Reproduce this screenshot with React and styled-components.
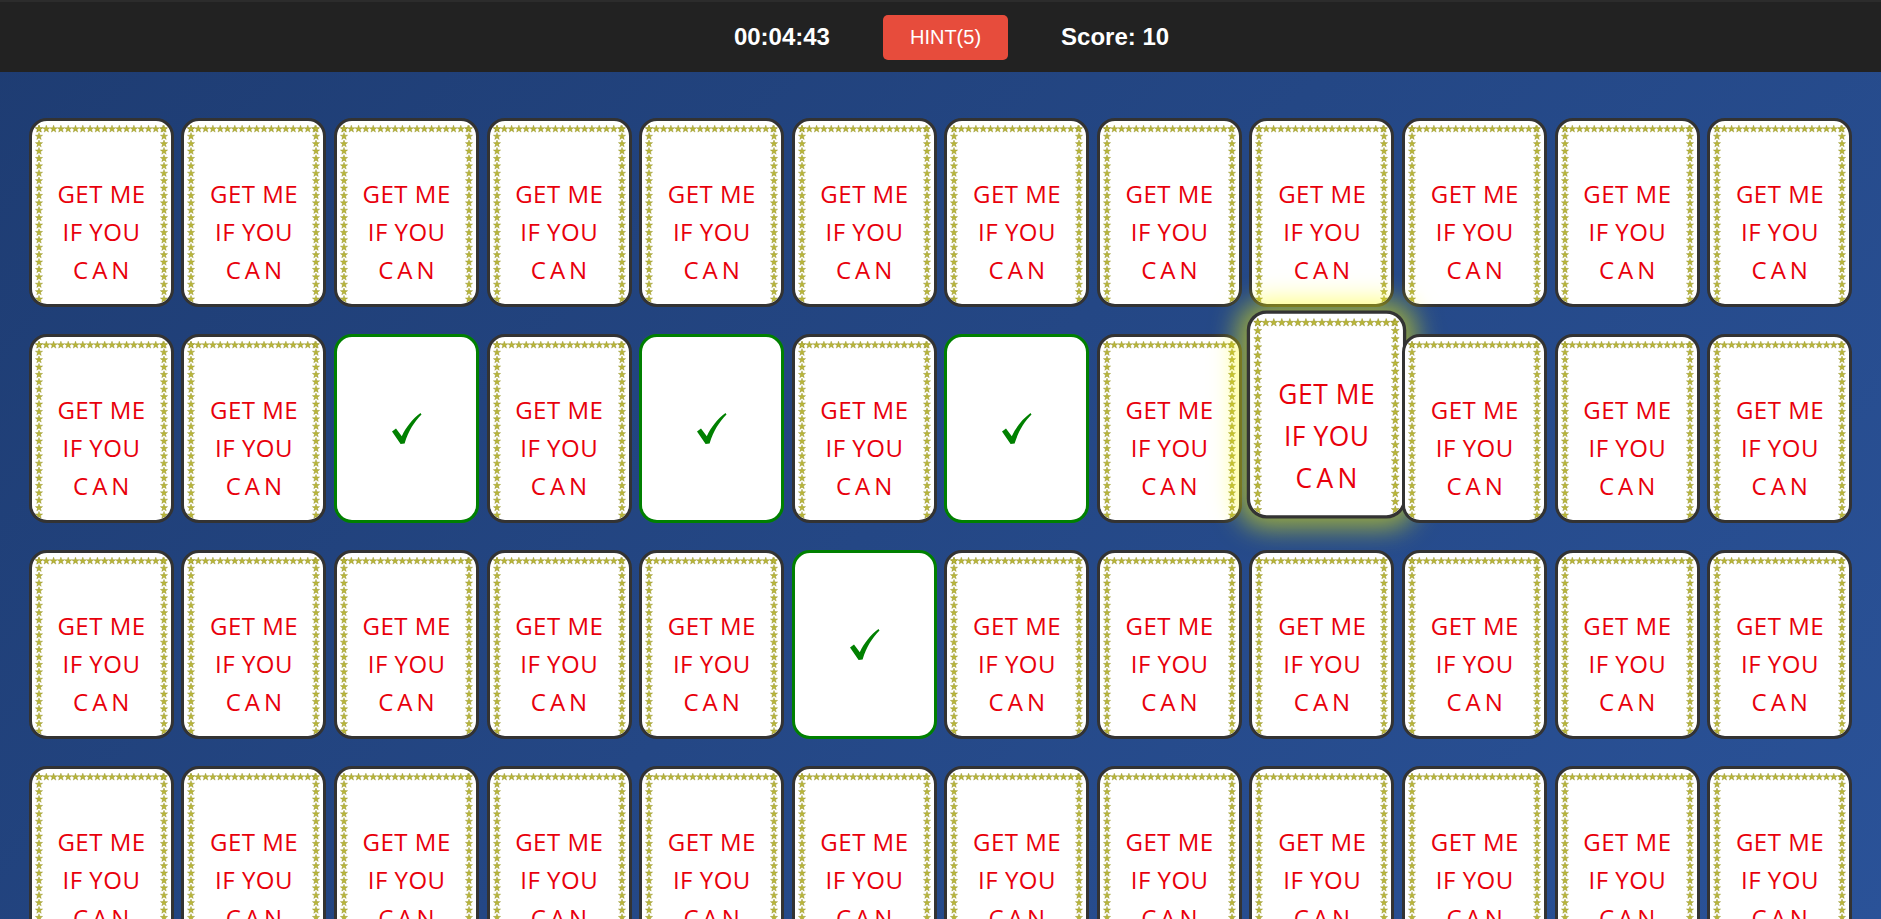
import React from 'react'
import styled, { createGlobalStyle } from 'styled-components'

const GlobalStyle = createGlobalStyle`
  html, body {
    margin: 0;
    padding: 0;
    height: 100vh;
    overflow: hidden;
  }
  body {
    background: linear-gradient(135deg, #1e3c72, #2a5298);
    font-family: "Liberation Sans", Arial, sans-serif;
  }
`

const Header = styled.header`
  height: 72px;
  background-color: #222;
  display: flex;
  align-items: center;
  justify-content: center;
  gap: 53px;
  padding-left: 22px;
  box-sizing: border-box;
  border-top: 2px solid #2c2c2c;
`

const Stat = styled.div`
  color: #fff;
  font-size: 24px;
  font-weight: 700;
`

const HintButton = styled.button`
  height: 45px;
  padding: 0 27px;
  border: none;
  border-radius: 5px;
  background-color: #e74c3c;
  color: #fff;
  font-family: "Liberation Sans", Arial, sans-serif;
  font-size: 20px;
  cursor: pointer;
`

const Board = styled.main`
  display: grid;
  grid-template-columns: repeat(12, 145px);
  column-gap: 7.6px;
  row-gap: 27px;
  justify-content: center;
  padding: 46px 0;
`

const Card = styled.div`
  position: relative;
  width: 145px;
  height: 189px;
  box-sizing: border-box;
  border: 3px solid ${({ $matched }) => ($matched ? '#008000' : '#333')};
  border-radius: 18px;
  background-color: #fff;
  overflow: hidden;
  display: flex;
  align-items: center;
  justify-content: center;
  transform: ${({ $hinted }) => ($hinted ? 'translate(5px, -14px) scale(1.1)' : 'none')};
  box-shadow: ${({ $hinted }) => ($hinted ? '0 0 24px 8px rgba(255, 255, 0, 0.55)' : 'none')};
`

const Frame = styled.svg`
  position: absolute;
  inset: 0;
  width: 100%;
  height: 100%;
`

const Caption = styled.div`
  align-self: flex-start;
  padding-top: 54px;
  display: flex;
  flex-direction: column;
  align-items: center;
  font-family: "Open Sans", "Noto Sans", sans-serif;
  font-size: 24px;
  line-height: 38px;
  color: #e8000b;
`

const Line = styled.span`
  letter-spacing: ${({ $wide }) => ($wide ? '4px' : '0.5px')};
  margin-right: ${({ $wide }) => ($wide ? '-4px' : '-0.5px')};
`

const CheckMark = () => (
  <svg width="31" height="33" viewBox="0 0 31 33">
    <path
      d="M1 19.5 L5 16.5 L10.8 24.2 C15 15 21.5 7 29.5 1 L30.5 2.6 C23.5 9.5 17.5 19 13.6 31.5 L9.6 32 Z"
      fill="#008000"
    />
  </svg>
)

const topStars = Array.from({ length: 18 }, (_, i) => [7 + i * 7.3, 8])
const sideStars = Array.from({ length: 25 }, (_, i) => 8 + i * 7.4)

const StarFrame = () => (
  <Frame>
    {topStars.map(([x, y], i) => (
      <use key={'t' + i} href="#star" x={x} y={y} />
    ))}
    {sideStars.map((y, i) => (
      <use key={'l' + i} href="#star" x={7} y={y} />
    ))}
    {sideStars.map((y, i) => (
      <use key={'r' + i} href="#star" x={132} y={y} />
    ))}
  </Frame>
)

const matched = [14, 16, 18, 29]
const hinted = 20

const cards = Array.from({ length: 48 }, (_, i) => i)

const App = () => {
  return (
    <>
      <GlobalStyle />
      <svg width="0" height="0" style={{ position: 'absolute' }}>
        <defs>
          <polygon
            id="star"
            points="0,-3.8 0.9,-1.25 3.6,-1.17 1.45,0.47 2.23,3.07 0,1.55 -2.23,3.07 -1.45,0.47 -3.6,-1.17 -0.9,-1.25"
            fill="#b9b638"
            stroke="#8e8b22"
            strokeWidth="0.4"
          />
        </defs>
      </svg>
      <Header>
        <Stat>00:04:43</Stat>
        <HintButton>HINT(5)</HintButton>
        <Stat>Score: 10</Stat>
      </Header>
      <Board>
        {cards.map((i) =>
          matched.includes(i) ? (
            <Card key={i} $matched>
              <CheckMark />
            </Card>
          ) : (
            <Card key={i} $hinted={i === hinted}>
              <StarFrame />
              <Caption>
                <Line>GET ME</Line>
                <Line>IF YOU</Line>
                <Line $wide>CAN</Line>
              </Caption>
            </Card>
          )
        )}
      </Board>
    </>
  )
}

export default App
